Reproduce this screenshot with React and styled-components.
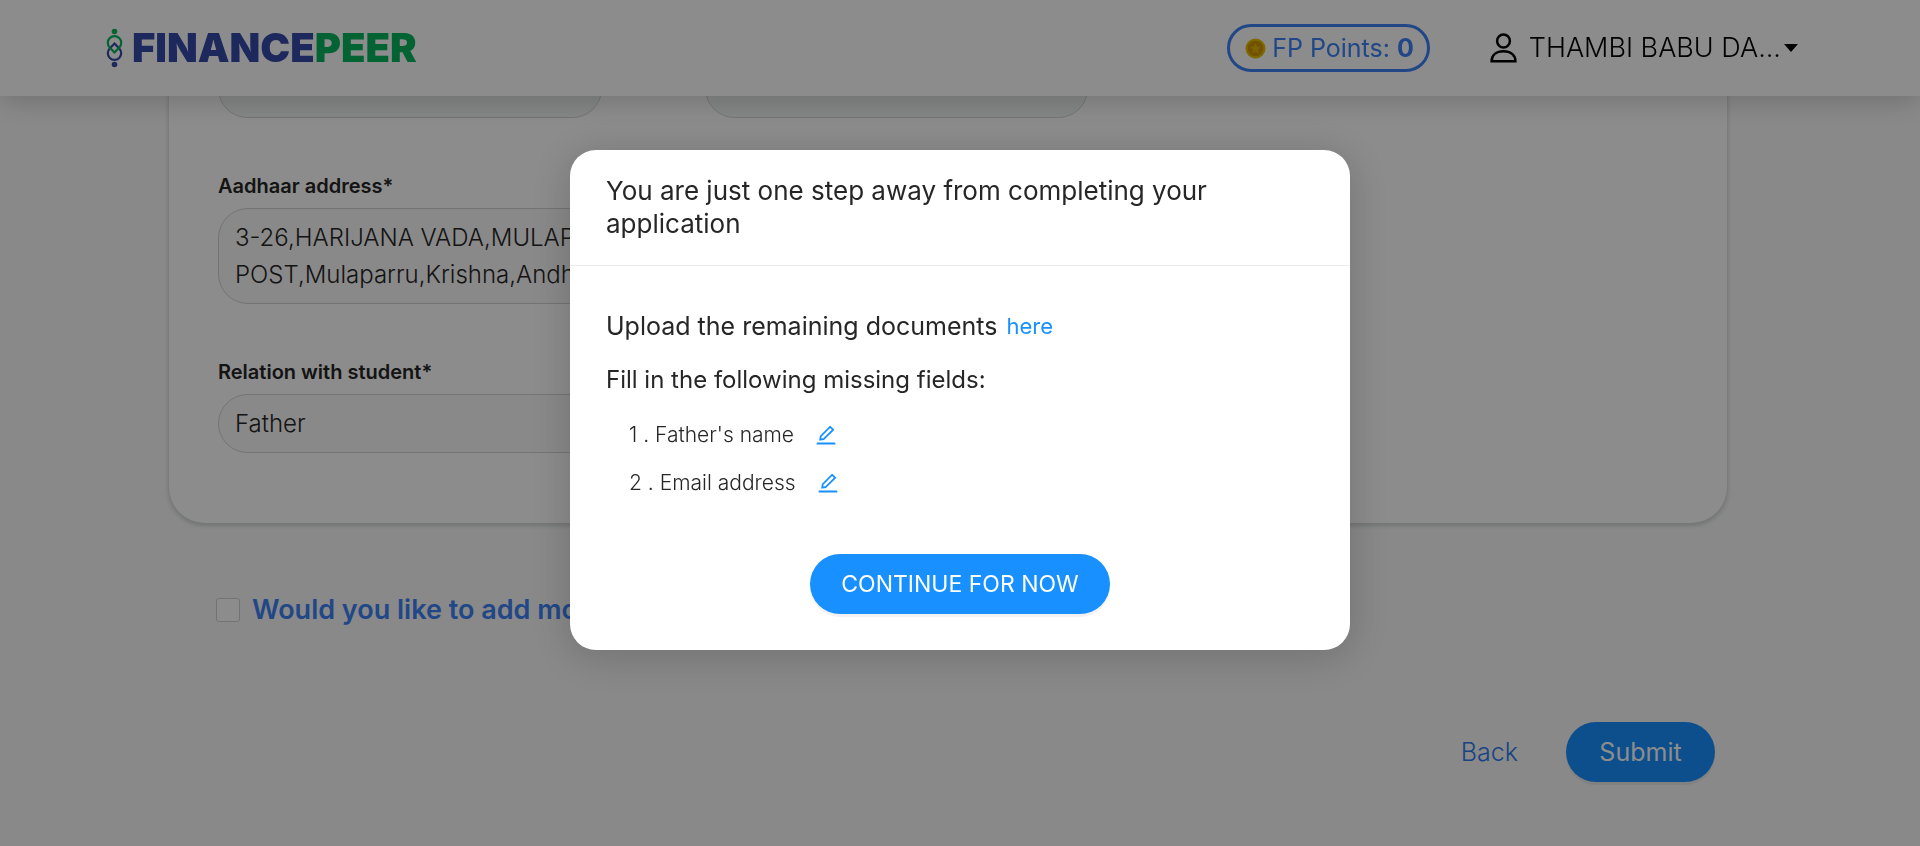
import React from 'react';
import styled, { createGlobalStyle } from 'styled-components';
import { AiOutlineEdit } from 'react-icons/ai';

const BLUE = '#1890ff';
const BRAND = '#3c82f6';

const GlobalStyle = createGlobalStyle`
  *, *::before, *::after { box-sizing: border-box; }
  body {
    margin: 0;
    background: #f9f9f9;
    color: #262626;
    font-family: Inter, "Open Sans", sans-serif;
  }
  button, input, textarea { font-family: inherit; }
`;

const Header = styled.header`
  position: fixed;
  inset: 0 0 auto 0;
  z-index: 1;
  display: flex;
  align-items: center;
  justify-content: space-between;
  height: 96px;
  padding: 0 122px 0 106px;
  background: #fff;
  box-shadow: 0 4px 28px rgba(0, 0, 0, 0.2);
`;

const Logo = styled.a`
  display: flex;
  align-items: center;
  gap: 9px;
  color: #364aa8;
  font-size: 40px;
  font-weight: 900;
  line-height: 48px;
  text-decoration: none;
`;

const LogoAccent = styled.span`
  color: #06b45c;
`;

const Account = styled.div`
  display: flex;
  align-items: center;
  gap: 60px;
`;

const Points = styled.div`
  display: flex;
  align-items: center;
  gap: 6px;
  height: 48px;
  padding: 0 13px 0 15px;
  border: 3px solid ${BRAND};
  border-radius: 24px;
  color: ${BRAND};
  font-size: 25px;
  font-weight: 400;
  line-height: 32px;
  white-space: nowrap;

  b { font-weight: 700; }
`;

const UserMenu = styled.button`
  display: flex;
  align-items: center;
  padding: 0;
  border: 0;
  background: none;
  color: #000;
  font-size: 27px;
  font-weight: 300;
  line-height: 32px;
  white-space: nowrap;
`;

const UserName = styled.span`
  margin: 0 3px 0 12px;
`;

const Page = styled.main`
  padding: 0 193px 64px 169px;
`;

const Card = styled.section`
  display: grid;
  grid-template-columns: repeat(3, minmax(0, 1fr));
  row-gap: 56px;
  padding: 59px 49px 70px;
  border-radius: 0 0 36px 36px;
  background: #fff;
  box-shadow: 0 2px 4px 1px rgba(40, 70, 60, 0.2);
`;

const Field = styled.div`
  display: flex;
  flex-direction: column;
  gap: 10px;
  padding-right: 103px;
  grid-column: ${(p) => p.$column || 'auto'};
`;

const Label = styled.label`
  font-size: 20px;
  font-weight: 600;
  line-height: 24px;
`;

const TextInput = styled.input`
  width: 100%;
  height: 59px;
  padding: 0 16px;
  border: 1px solid #d2d2d2;
  border-radius: 30px;
  background: ${(p) => (p.readOnly ? '#f2f5f4' : '#fafafa')};
  color: #262626;
  font-size: 24px;
  font-weight: 300;
`;

const TextArea = styled.textarea`
  display: block;
  width: 100%;
  height: 96px;
  padding: 10px 16px;
  border: 1px solid #d2d2d2;
  border-radius: 30px;
  background: #fafafa;
  color: #262626;
  font-size: 24px;
  font-weight: 300;
  line-height: 37px;
  resize: none;
  overflow: hidden;
`;

const Option = styled.label`
  display: flex;
  align-items: center;
  gap: 12px;
  margin: 67px 0 0 47px;
  color: ${BRAND};
  font-size: 27px;
  font-weight: 600;
  line-height: 40px;
`;

const Checkbox = styled.input`
  appearance: none;
  width: 24px;
  height: 24px;
  margin: 0;
  border: 1px solid #d2d2d2;
  border-radius: 3px;
  background: #fff;
`;

const Actions = styled.div`
  display: flex;
  justify-content: flex-end;
  align-items: center;
  gap: 48px;
  margin: 92px 12px 0 0;
`;

const LinkButton = styled.button`
  padding: 0;
  border: 0;
  background: none;
  color: #2f7df0;
  font-size: 25px;
  font-weight: 300;
  line-height: 32px;
`;

const PrimaryButton = styled.button`
  min-width: ${(p) => (p.$wide ? 300 : 149)}px;
  height: 60px;
  padding: 0 30px;
  border: 0;
  border-radius: 30px;
  background: ${BLUE};
  box-shadow: 0 3px 0 rgba(0, 0, 0, 0.05);
  color: #fff;
  font-size: ${(p) => (p.$wide ? 23 : 25)}px;
  font-weight: 400;
`;

const Overlay = styled.div`
  position: fixed;
  inset: 0;
  z-index: 2;
  display: flex;
  justify-content: center;
  align-items: flex-start;
  padding-top: 150px;
  background: rgba(0, 0, 0, 0.45);
`;

const Dialog = styled.div`
  width: 780px;
  max-width: 100%;
  border-radius: 26px;
  background: #fff;
  box-shadow: 0 6px 42px 4px rgba(0, 0, 0, 0.16);
`;

const DialogTitle = styled.h2`
  margin: 0;
  padding: 24px 36px 25px;
  border-bottom: 1px solid #ececec;
  font-size: 26px;
  font-weight: 400;
  line-height: 33px;
`;

const DialogBody = styled.div`
  display: flex;
  flex-direction: column;
  padding: 43px 36px 36px;
`;

const Line = styled.p`
  display: flex;
  align-items: center;
  gap: 9px;
  margin: 0 0 20px;
  font-size: ${(p) => (p.$lead ? 25 : 24)}px;
  line-height: 34px;
`;

const HereLink = styled.a`
  color: ${BLUE};
  font-size: 22px;
  text-decoration: none;
`;

const MissingList = styled.ol`
  margin: -6px 0 47px;
  padding: 0 0 0 23px;
  list-style: none;
`;

const MissingItem = styled.li`
  display: flex;
  align-items: center;
  gap: 20px;
  font-size: 21px;
  font-weight: 300;
  line-height: 48px;
`;

const EditButton = styled.button`
  display: flex;
  padding: 0;
  border: 0;
  background: none;
  color: ${BLUE};
  font-size: 24px;
`;

const ButtonRow = styled.div`
  display: flex;
  justify-content: center;
`;

const LogoMark = () => (
  <svg width="17" height="40" viewBox="0 0 17 40" fill="none" aria-hidden="true">
    <circle cx="8.5" cy="3.5" r="2.8" fill="#06b45c" />
    <circle cx="8.5" cy="36.5" r="2.8" fill="#364aa8" />
    <path d="M8.5 15.5L13.3 20.5A6.7 6.7 0 1 1 3.7 20.5Z" stroke="#364aa8" strokeWidth="2.2" />
    <path d="M8.5 24.5L3.7 19.5A6.7 6.7 0 1 1 13.3 19.5Z" stroke="#06b45c" strokeWidth="2.2" />
  </svg>
);

const Coin = () => (
  <svg width="21" height="21" viewBox="0 0 21 21" aria-hidden="true">
    <circle cx="10.5" cy="10.5" r="10" fill="#e2c000" />
    <circle cx="10.5" cy="10.5" r="7.8" fill="#cf9600" />
    <path d="M10.5 5l1.6 3.6 3.9.4-2.9 2.6.8 3.9-3.4-2-3.4 2 .8-3.9L5 9l3.9-.4z" fill="#e2b200" />
  </svg>
);

const UserIcon = () => (
  <svg width="27" height="30" viewBox="0 0 27 30" fill="none" stroke="#000" strokeWidth="2.5" aria-hidden="true">
    <circle cx="13.5" cy="8" r="6.4" />
    <path d="M1.6 28.2C1.6 22 6.3 18.2 13.5 18.2S25.4 22 25.4 28.2Z" />
  </svg>
);

const Caret = () => (
  <svg width="14" height="8" viewBox="0 0 14 8" aria-hidden="true">
    <path d="M0 0H14L7 8Z" fill="#000" />
  </svg>
);

const missingFields = ["Father's name", 'Email address'];

export default function App() {
  return (
    <>
      <GlobalStyle />
      <Header>
        <Logo href="#home">
          <LogoMark />
          <span>FINANCE<LogoAccent>PEER</LogoAccent></span>
        </Logo>
        <Account>
          <Points>
            <Coin />
            <span>FP Points: <b>0</b></span>
          </Points>
          <UserMenu type="button">
            <UserIcon />
            <UserName>THAMBI BABU DA...</UserName>
            <Caret />
          </UserMenu>
        </Account>
      </Header>

      <Page>
        <Card>
          <Field>
            <TextInput aria-label="City" readOnly />
          </Field>
          <Field>
            <TextInput aria-label="State" readOnly />
          </Field>
          <Field $column="1 / span 2">
            <Label htmlFor="address">Aadhaar address*</Label>
            <TextArea
              id="address"
              defaultValue={'3-26,HARIJANA VADA,MULAPARRU\nPOST,Mulaparru,Krishna,Andhra Pradesh'}
            />
          </Field>
          <Field $column="1">
            <Label htmlFor="relation">Relation with student*</Label>
            <TextInput id="relation" defaultValue="Father" />
          </Field>
        </Card>

        <Option>
          <Checkbox type="checkbox" />
          Would you like to add more
        </Option>

        <Actions>
          <LinkButton type="button">Back</LinkButton>
          <PrimaryButton type="submit">Submit</PrimaryButton>
        </Actions>
      </Page>

      <Overlay>
        <Dialog role="dialog" aria-modal="true" aria-labelledby="dialog-title">
          <DialogTitle id="dialog-title">
            You are just one step away from completing your application
          </DialogTitle>
          <DialogBody>
            <Line $lead>
              Upload the remaining documents <HereLink href="#documents">here</HereLink>
            </Line>
            <Line>Fill in the following missing fields:</Line>
            <MissingList>
              {missingFields.map((name, i) => (
                <MissingItem key={name}>
                  <span>{i + 1} . {name}</span>
                  <EditButton type="button" aria-label={`Edit ${name}`}>
                    <AiOutlineEdit />
                  </EditButton>
                </MissingItem>
              ))}
            </MissingList>
            <ButtonRow>
              <PrimaryButton type="button" $wide>CONTINUE FOR NOW</PrimaryButton>
            </ButtonRow>
          </DialogBody>
        </Dialog>
      </Overlay>
    </>
  );
}
